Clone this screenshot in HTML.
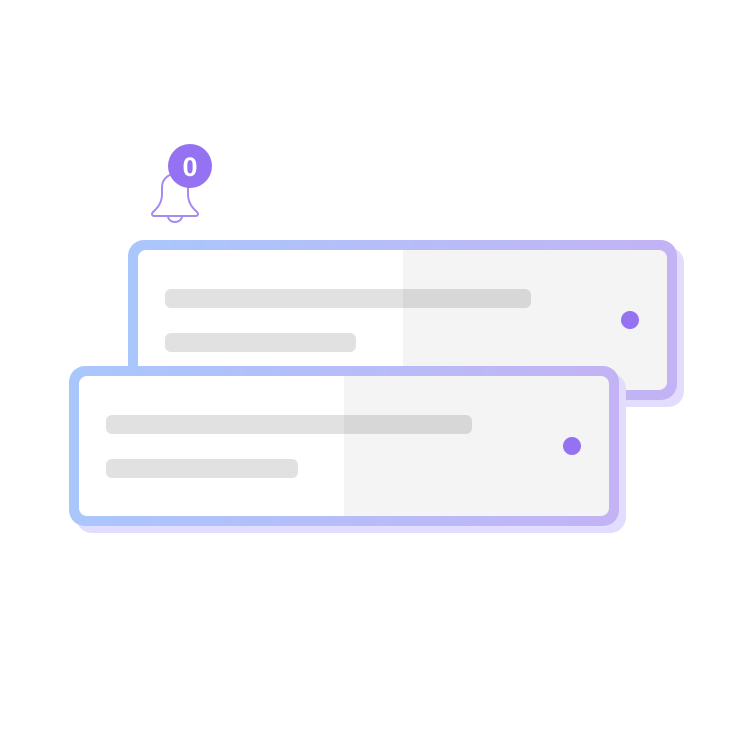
<!DOCTYPE html>
<html><head><meta charset="utf-8"><style>
html,body{margin:0;padding:0;background:#fff;width:750px;height:750px;overflow:hidden}
</style></head><body>
<svg width="750" height="750" viewBox="0 0 750 750" xmlns="http://www.w3.org/2000/svg">
<defs>
<linearGradient id="g1" x1="128" y1="0" x2="677" y2="0" gradientUnits="userSpaceOnUse">
<stop offset="0" stop-color="#a9c7fd"/><stop offset="1" stop-color="#c3b3f4"/></linearGradient>
<linearGradient id="g2" x1="69" y1="0" x2="619" y2="0" gradientUnits="userSpaceOnUse">
<stop offset="0" stop-color="#a9c7fd"/><stop offset="1" stop-color="#c3b3f4"/></linearGradient>
</defs>
<rect x="135" y="247" width="549" height="160" rx="16" fill="#e2dcfd"/>
<rect x="128" y="240" width="549" height="160" rx="16" fill="url(#g1)"/>
<rect x="138" y="250" width="529" height="140" rx="8" fill="#fff"/>
<rect x="165" y="289" width="366" height="19" rx="6" fill="#e1e1e1"/>
<rect x="165" y="333" width="191" height="19" rx="6" fill="#e1e1e1"/>
<path d="M403 250 H659 a8 8 0 0 1 8 8 V382 a8 8 0 0 1 -8 8 H403 Z" fill="#000" fill-opacity="0.045"/>
<circle cx="630" cy="320" r="9" fill="#9472f2"/>
<rect x="76" y="373" width="550" height="160" rx="16" fill="#e2dcfd"/>
<rect x="69" y="366" width="550" height="160" rx="16" fill="url(#g2)"/>
<rect x="79" y="376" width="530" height="140" rx="8" fill="#fff"/>
<rect x="106" y="415" width="366" height="19" rx="6" fill="#e1e1e1"/>
<rect x="106" y="459" width="192" height="19" rx="6" fill="#e1e1e1"/>
<path d="M344 376 H601 a8 8 0 0 1 8 8 V508 a8 8 0 0 1 -8 8 H344 Z" fill="#000" fill-opacity="0.045"/>
<circle cx="572" cy="446" r="9" fill="#9472f2"/>
<g fill="none" stroke="#a58af3" stroke-width="2" stroke-linejoin="round">
<path d="M162 194 V187 a13 13 0 0 1 26 0 V194 q0 10 8 17 q2 2 2 3 a2 2 0 0 1 -2 2 H154 a2 2 0 0 1 -2 -2 q0 -1 2 -3 q8 -7 8 -17 Z"/>
<path d="M168 216 a7 6 0 0 0 14 0"/>
</g>
<circle cx="190" cy="166" r="22" fill="#9472f2"/>
<text x="190" y="176" text-anchor="middle" font-family="Liberation Sans, sans-serif" font-weight="bold" font-size="27" fill="#fff">0</text>
</svg>
</body></html>
